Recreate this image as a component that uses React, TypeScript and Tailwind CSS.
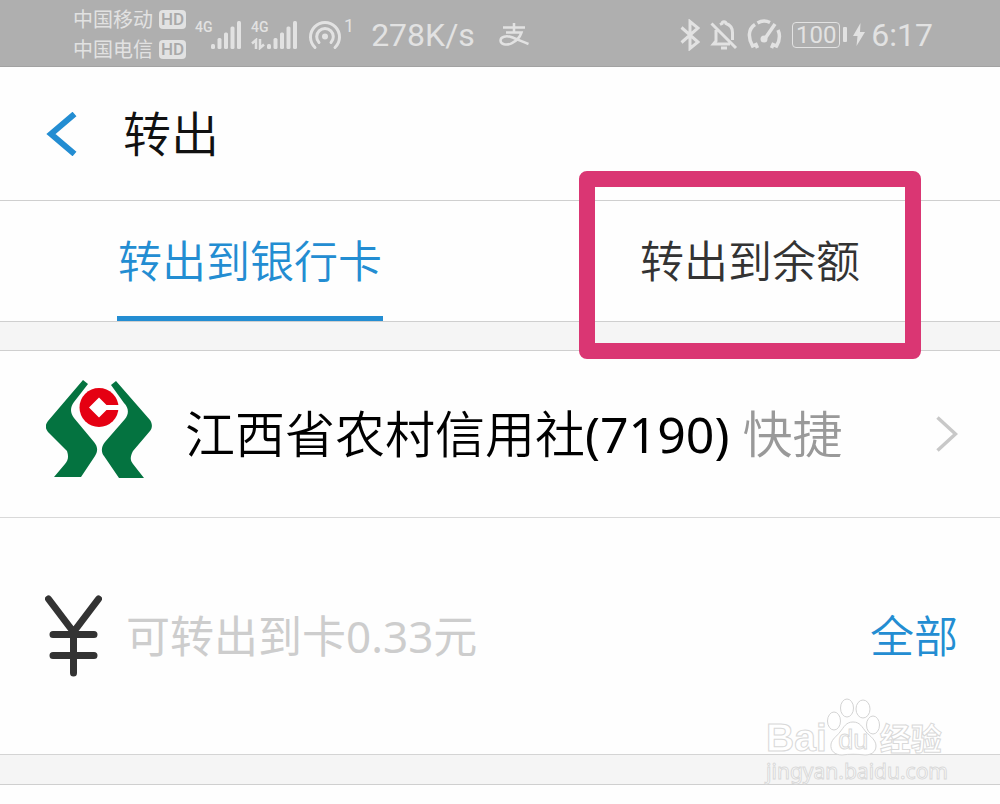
import React from "react";

const FONT = "font-['Noto_Sans','Noto_Sans_CJK_SC',sans-serif]";

function HdBadge() {
  return (
    <span className="flex h-[19px] w-[27px] items-center justify-center rounded-[4px] bg-[#e2e2e2] font-[Roboto,sans-serif] text-[17px] leading-none font-medium text-[#a8a8a8]">
      HD
    </span>
  );
}

function Carrier({ name }: { name: string }) {
  return (
    <div className="flex h-[30px] items-center gap-[6px]">
      <span className="text-[20px] leading-[30px]">{name}</span>
      <HdBadge />
    </div>
  );
}

function Signal({ arrows = false }: { arrows?: boolean }) {
  return (
    <div className="flex h-[30px]">
      <div className="flex w-[16px] flex-col justify-between">
        <span className="font-['Roboto',sans-serif] text-[14px] leading-[14px] font-medium">4G</span>
        {arrows && (
          <svg width="14" height="12" viewBox="0 0 14 12" fill="none" stroke="currentColor" strokeWidth="2.500" aria-hidden="true">
            <path d="M5 11V2L1 5.500M9 1v9l4-3.500" />
          </svg>
        )}
      </div>
      <svg width="31" height="30" viewBox="0 0 31 30" fill="currentColor" aria-hidden="true">
        <rect x="0" y="24" width="4" height="5" rx="1.500" />
        <rect x="6.500" y="18" width="4" height="11" rx="1.500" />
        <rect x="13" y="12.500" width="4" height="16.500" rx="1.500" />
        <rect x="19.500" y="6.500" width="4" height="22.500" rx="1.500" />
        <rect x="26" y="1" width="4" height="28" rx="1.500" />
      </svg>
    </div>
  );
}

function StatusBar() {
  return (
    <div className="flex h-[67px] items-center justify-between border-b border-[#a2a2a2] bg-[#afafaf] pt-[3px] pr-[67px] pl-[73px] text-[#e2e2e2]">
      <div className="flex items-center">
        <div>
          <Carrier name="中国移动" />
          <Carrier name="中国电信" />
        </div>
        <div className="ml-[9px] flex gap-[9px]">
          <Signal />
          <Signal arrows />
        </div>
        <svg className="ml-[10px]" width="34" height="34" viewBox="0 0 34 34" fill="none" stroke="currentColor" strokeWidth="3" strokeLinecap="round" aria-hidden="true">
          <path d="M7 29.500a14.500 14.500 0 1 1 20 0" />
          <path d="M11 24.500a8.300 8.300 0 1 1 12 0" />
          <circle cx="17" cy="18.500" r="3" fill="currentColor" stroke="none" />
        </svg>
        <span className="ml-[2px] self-start pt-[12px] font-[Roboto,sans-serif] text-[18px] leading-[18px]">1</span>
        <span className="ml-[17px] font-[Roboto,sans-serif] text-[32px] leading-[40px]">278K/s</span>
        <svg className="ml-[24px]" width="31" height="25" viewBox="0 0 31 25" fill="none" stroke="currentColor" strokeWidth="2.500" aria-label="支付宝">
          <path d="M4 5.500h22M15 1v9M7 10.500h15.500C21 15 17.500 19 12.500 21.300 7 24 1.500 22 1.500 18.500c0-4 6-5 10.500-3.500 5 1.600 11 4.500 17.500 7" />
        </svg>
      </div>
      <div className="flex items-center">
        <svg width="20" height="32" viewBox="0 0 20 32" fill="none" stroke="currentColor" strokeWidth="3" aria-label="蓝牙">
          <path d="M1.500 8.500 18 23 10 29.500V2.500L18 9 1.500 23.500" />
        </svg>
        <svg className="ml-[10px]" width="28" height="30" viewBox="0 0 28 30" fill="none" stroke="currentColor" strokeWidth="3" aria-label="静音">
          <path d="M1.500 3.500 26 28M6 10v11l-2.500 3H20M10 4.500 12 3.500c.3-2.500 3.700-2.500 4 0 4.500 1.500 6.500 5 6.500 9V20" />
          <path d="M11 28h6" />
        </svg>
        <svg className="ml-[9px]" width="35" height="32" viewBox="0 0 35 32" fill="none" stroke="currentColor" strokeWidth="3.500" aria-label="性能模式">
          <path d="M10.500 29 9 25.500 5.500 27C1 19 1 10 8 5.500M10.500 4C14 2 19 1.500 23 3.500M31 11c2.500 5.500 1.500 11-1.500 16L26 25.500 24.500 29" />
          <path d="m28 5-11 16" />
          <circle cx="17" cy="20" r="3.500" fill="currentColor" stroke="none" />
        </svg>
        <div className="ml-[10px] flex items-center gap-[3px]">
          <span className="flex h-[26px] w-[48px] items-center justify-center rounded-[4px] border border-[#e2e2e2] font-[Roboto,sans-serif] text-[24px] leading-none">
            100
          </span>
          <span className="h-[15px] w-[4px] rounded-[1px] bg-[#e2e2e2]" />
        </div>
        <svg className="ml-[6px]" width="12" height="23" viewBox="0 0 12 23" fill="currentColor" aria-hidden="true">
          <path d="M7.500 0 0 13h4.500L3.500 23 12 9H7z" />
        </svg>
        <span className="ml-[6px] font-[Roboto,sans-serif] text-[32px] leading-[40px]">6:17</span>
      </div>
    </div>
  );
}

function BankLogo() {
  return (
    <svg className="mb-[8px] shrink-0" width="106" height="100" viewBox="0 0 106 100" aria-hidden="true">
      <path fill="#047340" d="M37 0l5 4-14 18c-4 5-4 11 0 16l20 24c4 5 4 9 1 14L35 97H8l11-13c3-4 4-7 2-13L2 52c-3-4-3-7 0-11z" />
      <path fill="#047340" d="M70 1l-5 4 13 18c5 5 5 11 1 16L59 62c-4 5-4 10-1 14l15 22h25L87 84c-3-4-3-7 0-13l17-20c3-4 2-8 0-11z" />
      <circle cx="53" cy="27.500" r="19.500" fill="#e50012" />
      <path fill="#fff" d="M53 17.500 60.500 25H73v5H60.500L53 37.500l-10-10z" />
    </svg>
  );
}

function Tabs() {
  return (
    <div role="tablist" className="grid grid-cols-2 border-b border-[#cfcfcf] text-[44px] leading-[60px] font-[350]">
      <button type="button" role="tab" aria-selected="true" className="flex justify-center text-[#238dd2]">
        <span className="flex h-[120px] items-center border-b-[5px] border-[#238dd2] px-px pt-[5px]">转出到银行卡</span>
      </button>
      <button type="button" role="tab" aria-selected="false" className="relative flex h-[120px] items-center justify-center text-[#333]">
        转出到余额
        <span className="pointer-events-none absolute -top-[30px] left-1/2 z-10 h-[188px] w-[342px] -translate-x-1/2 rounded-lg border-[16px] border-[#da3673]" />
      </button>
    </div>
  );
}

function Watermark() {
  return (
    <div className="pointer-events-none absolute right-[52px] bottom-[20px] text-white [-webkit-text-stroke:1px_#d9d9d9]">
      <div className="flex h-[60px] items-end">
        <span className="font-['Liberation_Sans',sans-serif] text-[39px] leading-[40px] font-bold">Bai</span>
        <div className="relative flex h-[58px] w-[53px] items-end justify-center self-start">
          <svg className="absolute inset-0" width="53" height="58" viewBox="0 0 53 58" fill="#fff" stroke="#d4d4d4" aria-hidden="true">
            <ellipse cx="7" cy="23" rx="6.500" ry="9" />
            <ellipse cx="20" cy="10" rx="6.500" ry="9" />
            <ellipse cx="36" cy="11" rx="7" ry="9" />
            <ellipse cx="46" cy="27" rx="6.500" ry="9" />
            <path d="M26 24c7 0 9 5 13 10 4 4 10 8 10 14 0 6-5 9-11 9-8-1-16-1-23 0-7 0-12-4-11-11 1-5 6-8 9-12 4-5 6-10 13-10z" />
          </svg>
          <span className="relative font-['Liberation_Sans',sans-serif] text-[27px] leading-[32px]">du</span>
        </div>
        <span className="text-[31px] leading-[40px] font-bold">经验</span>
      </div>
      <div className="text-[21px] leading-[26px]">jingyan.baidu.com</div>
    </div>
  );
}

export default function App() {
  return (
    <div className={`relative flex min-h-screen flex-col overflow-hidden bg-[#fefefe] ${FONT}`}>
      <StatusBar />
      <header className="flex h-[134px] items-center gap-[46px] border-b border-[#cfcfcf] pl-[46px]">
        <button type="button" aria-label="返回" className="text-[#238dd2]">
          <svg width="31" height="44" viewBox="0 0 31 44" fill="none" stroke="currentColor" strokeWidth="6">
            <path d="M28.500 2 5 22l23.500 20" />
          </svg>
        </button>
        <h1 className="text-[48px] leading-[60px] font-[350] text-[#111]">转出</h1>
      </header>
      <Tabs />
      <div className="h-[29px] border-b border-[#cfcfcf] bg-[#f5f5f5]" />
      <button type="button" className="flex h-[167px] items-center border-b border-[#d9d9d9] pr-[42px] pl-[46px] text-left">
        <BankLogo />
        <span className="ml-[33px] flex-1 text-[50px] leading-[64px] font-[350] whitespace-nowrap text-black">
          江西省农村信用社<span className="font-normal">(7190)</span> <span className="text-[#999]">快捷</span>
        </span>
        <svg width="22" height="36" viewBox="0 0 22 36" fill="none" stroke="#c8c8c8" strokeWidth="3.500" aria-hidden="true">
          <path d="m1.500 1.500 18 16.500-18 16.500" />
        </svg>
      </button>
      <div className="flex h-[237px] items-center border-b border-[#d4d4d4] pr-[42px] pl-[45px]">
        <svg className="shrink-0" width="57" height="82" viewBox="0 0 57 82" fill="none" stroke="#333" strokeWidth="7" strokeLinecap="round" aria-hidden="true">
          <path d="M3.500 4 28.500 37 53.500 4M28.500 37v41M8 39.500h41M8 60.500h41" />
        </svg>
        <input
          type="text"
          aria-label="转出金额"
          placeholder="可转出到卡0.33元"
          className="ml-[24px] h-[70px] min-w-0 flex-1 bg-transparent text-[44px] font-normal outline-none placeholder:text-[#cdcdcd]"
        />
        <button type="button" className="text-[44px] leading-[60px] font-[350] text-[#238dd2]">
          全部
        </button>
      </div>
      <div className="h-[30px] border-b border-[#cfcfcf] bg-[#f5f5f5]" />
      <Watermark />
    </div>
  );
}
